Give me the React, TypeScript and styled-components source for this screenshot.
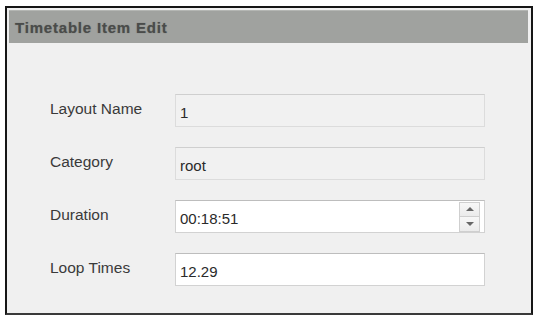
import React from 'react'
import styled, { createGlobalStyle } from 'styled-components'

const GlobalStyle = createGlobalStyle`
  html, body {
    margin: 0;
    padding: 0;
    background: #ffffff;
  }
  body {
    font-family: "Liberation Sans", Arial, sans-serif;
  }
`

type Field = {
  label: string
  value: string
  disabled?: boolean
  spinner?: boolean
}

const fields: Field[] = [
  { label: 'Layout Name', value: '1', disabled: true },
  { label: 'Category', value: 'root', disabled: true },
  { label: 'Duration', value: '00:18:51', spinner: true },
  { label: 'Loop Times', value: '12.29' },
]

const App: React.FC = () => {
  return (
    <>
      <GlobalStyle />
      <Page>
        <Window>
          <TitleBar>
            <Title>Timetable Item Edit</Title>
          </TitleBar>
          <Form>
            {fields.map((f) => (
              <Row key={f.label}>
                <Label>{f.label}</Label>
                <Input $disabled={f.disabled}>
                  <Value>{f.value}</Value>
                  {f.spinner && (
                    <Spinner>
                      <SpinButton>
                        <Arrow $up />
                      </SpinButton>
                      <SpinButton>
                        <Arrow />
                      </SpinButton>
                    </Spinner>
                  )}
                </Input>
              </Row>
            ))}
          </Form>
        </Window>
      </Page>
    </>
  )
}
export default App

const Page = styled.div`
  width: 534px;
  height: 318px;
  padding: 6px 1px 0 5px;
  box-sizing: border-box;
  background: #ffffff;
`

const Window = styled.div`
  width: 528px;
  height: 309px;
  box-sizing: border-box;
  border: 2px solid #161616;
  border-bottom-color: #3a3a3a;
  background: #f0f0f0;
  display: flex;
  flex-direction: column;
  padding: 2px 3px 0 2px;
`

const TitleBar = styled.div`
  height: 32px;
  background: #a0a29f;
  border-top: 1px solid #b4b6b3;
  display: flex;
  align-items: center;
  padding-left: 6px;
`

const Title = styled.span`
  font-size: 15px;
  font-weight: bold;
  color: #4a4c4a;
  letter-spacing: 0.8px;
  text-shadow: 0 0 1px rgba(60, 60, 60, 0.5);
`

const Form = styled.div`
  display: flex;
  flex-direction: column;
  gap: 20px;
  padding: 51px 0 0 41px;
`

const Row = styled.div`
  display: flex;
  align-items: center;
  height: 33px;
`

const Label = styled.span`
  width: 125px;
  font-size: 15.5px;
  color: #3a3a3a;
  margin-top: -4px;
`

const Input = styled.div<{ $disabled?: boolean }>`
  width: 310px;
  height: 33px;
  box-sizing: border-box;
  display: flex;
  align-items: center;
  padding: 0 4px 0 4px;
  background: ${({ $disabled }) => ($disabled ? '#f1f1f1' : '#ffffff')};
  border: 1px solid ${({ $disabled }) => ($disabled ? '#dcdcdc' : '#d2d2d2')};
  border-top-color: ${({ $disabled }) => ($disabled ? '#cfcfcf' : '#bdbdbd')};
`

const Value = styled.span`
  flex: 1;
  font-size: 15px;
  color: #2a2a2a;
  padding-top: 4px;
`

const Spinner = styled.div`
  display: flex;
  flex-direction: column;
  width: 21px;
  height: 30px;
`

const SpinButton = styled.div`
  flex: 1;
  display: flex;
  align-items: center;
  justify-content: center;
  border: 1px solid #cfcfcf;
  background: linear-gradient(#f7f7f7, #ebebeb);
  & + & {
    border-top: none;
  }
`

const Arrow = styled.span<{ $up?: boolean }>`
  width: 0;
  height: 0;
  border-left: 4px solid transparent;
  border-right: 4px solid transparent;
  ${({ $up }) =>
    $up ? 'border-bottom: 4px solid #666;' : 'border-top: 4px solid #666;'}
`
